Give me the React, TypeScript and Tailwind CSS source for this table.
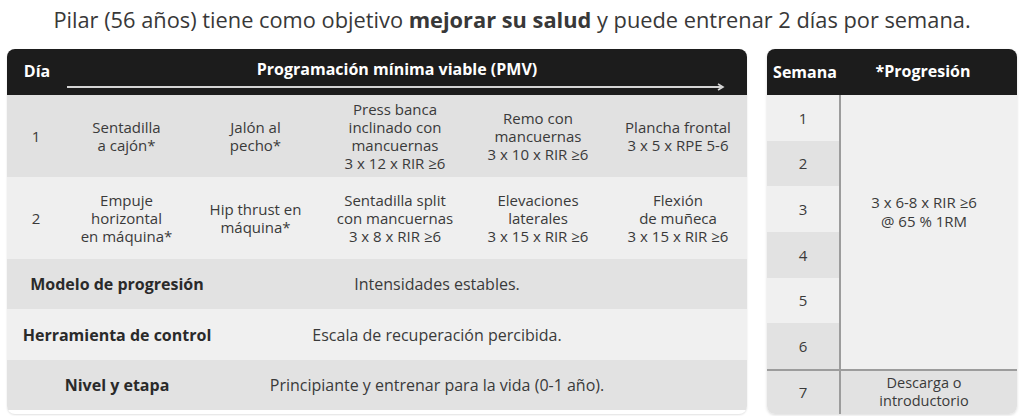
import React from 'react';

const dayRows = [
  {
    day: '1',
    bg: 'bg-[#e1e1e1]',
    cells: [
      ['Sentadilla', 'a cajón*'],
      ['Jalón al', 'pecho*'],
      ['Press banca', 'inclinado con', 'mancuernas', '3 x 12 x RIR ≥6'],
      ['Remo con', 'mancuernas', '3 x 10 x RIR ≥6'],
      ['Plancha frontal', '3 x 5 x RPE 5-6'],
    ],
  },
  {
    day: '2',
    bg: 'bg-[#efefef]',
    cells: [
      ['Empuje', 'horizontal', 'en máquina*'],
      ['Hip thrust en', 'máquina*'],
      ['Sentadilla split', 'con mancuernas', '3 x 8 x RIR ≥6'],
      ['Elevaciones', 'laterales', '3 x 15 x RIR ≥6'],
      ['Flexión', 'de muñeca', '3 x 15 x RIR ≥6'],
    ],
  },
];

const infoRows = [
  { label: 'Modelo de progresión', value: 'Intensidades estables.', bg: 'bg-[#e2e2e2]' },
  { label: 'Herramienta de control', value: 'Escala de recuperación percibida.', bg: 'bg-[#f0f0f0]' },
  { label: 'Nivel y etapa', value: 'Principiante y entrenar para la vida (0-1 año).', bg: 'bg-[#e2e2e2]' },
];

const weekBg = ['bg-[#f0f0f0]', 'bg-[#e2e2e2]', 'bg-[#f0f0f0]', 'bg-[#e2e2e2]', 'bg-[#f0f0f0]', 'bg-[#e2e2e2]'];

function ProgramTable() {
  return (
    <div className="w-[740px] rounded-[8px] overflow-hidden shadow-[0_1px_2px_rgba(0,0,0,0.12)]">
      <div className="h-[46px] bg-[#1c1c1c] text-white flex">
        <div className="w-[58px] flex items-center justify-center font-bold text-[16px] -mt-[2px] pl-[2px]">Día</div>
        <div className="w-[664px] flex flex-col items-center pt-[10px]">
          <div className="font-bold text-[16px] leading-[20px]">Programación mínima viable (PMV)</div>
          <svg width="660" height="8" viewBox="0 0 660 8" className="mt-[4px]">
            <line x1="0" y1="4" x2="656" y2="4" stroke="#d4d4d4" strokeWidth="2" />
            <path d="M651 1 L656 4 L651 7" fill="none" stroke="#d4d4d4" strokeWidth="1.6" />
          </svg>
        </div>
      </div>
      {dayRows.map((row) => (
        <div key={row.day} className={`h-[82px] flex items-center text-[15px] leading-[18px] text-[#3a3a3a] ${row.bg}`}>
          <div className="w-[58px] text-center">{row.day}</div>
          <div className="flex-1 grid grid-cols-[123px_135px_144px_142px_138px] items-center">
            {row.cells.map((lines, i) => (
              <div key={i} className="flex flex-col items-center text-center">
                {lines.map((l) => (
                  <span key={l}>{l}</span>
                ))}
              </div>
            ))}
          </div>
        </div>
      ))}
      {infoRows.map((r, i) => (
        <div key={r.label} className={`flex items-center text-[16px] text-[#2a2a2a] ${r.bg} ${i === 1 ? 'h-[51px]' : 'h-[50px]'}`}>
          <div className="w-[220px] text-center font-bold">{r.label}</div>
          <div className="flex-1 text-center pr-[100px] text-[#3a3a3a]">{r.value}</div>
        </div>
      ))}
    </div>
  );
}

function WeekTable() {
  return (
    <div className="w-[250px] rounded-[8px] overflow-hidden shadow-[0_1px_3px_rgba(0,0,0,0.15)]">
      <div className="h-[46px] bg-[#1c1c1c] text-white font-bold text-[16px] flex items-center">
        <div className="w-[72px] text-center pl-[4px]">Semana</div>
        <div className="flex-1 text-center pr-[10px] -mt-[2px]">*Progresión</div>
      </div>
      <div className="grid grid-cols-[72px_1fr] grid-rows-[repeat(6,45.67px)_45px] text-[15px] text-[#3a3a3a]">
        {weekBg.map((bg, i) => (
          <div
            key={i}
            className={`${bg} flex items-center justify-center`}
            style={{ gridRow: i + 1, gridColumn: 1 }}
          >
            {i + 1}
          </div>
        ))}
        <div
          className="bg-[#f0f0f0] border-l-2 border-[#9c9c9c] flex flex-col items-center justify-center leading-[19px] pr-[10px] pb-[40px]"
          style={{ gridRow: '1 / span 6', gridColumn: 2 }}
        >
          <span>3 x 6-8 x RIR ≥6</span>
          <span>@ 65 % 1RM</span>
        </div>
        <div className="bg-[#e2e2e2] border-t-2 border-[#9c9c9c] flex items-center justify-center" style={{ gridRow: 7, gridColumn: 1 }}>
          7
        </div>
        <div
          className="bg-[#e2e2e2] border-t-2 border-l-2 border-[#9c9c9c] flex flex-col items-center justify-center text-[14.5px] leading-[18px] pr-[10px]"
          style={{ gridRow: 7, gridColumn: 2 }}
        >
          <span>Descarga o</span>
          <span>introductorio</span>
        </div>
      </div>
    </div>
  );
}

export default function App() {
  return (
    <div className="w-[1024px] h-[416px] bg-white font-['Open_Sans',sans-serif] text-[#333] overflow-hidden">
      <h1 className="text-center text-[21.8px] leading-[28px] pt-[6px] text-[#383838]">
        Pilar (56 años) tiene como objetivo <span className="font-bold">mejorar su salud</span> y puede entrenar 2 días por semana.
      </h1>
      <div className="flex gap-[20px] pl-[7px] mt-[15px]">
        <ProgramTable />
        <WeekTable />
      </div>
    </div>
  );
}
